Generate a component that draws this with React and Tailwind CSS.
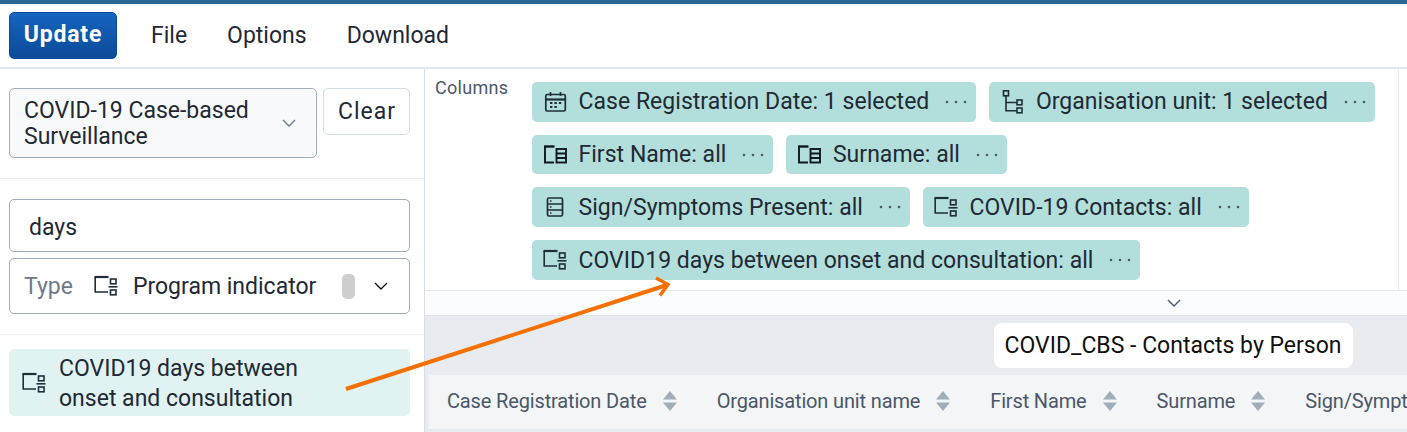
import React from "react";

const font = { fontFamily: "Roboto, sans-serif" };

function ProgramIcon({ className = "w-6 h-6" }) {
  return (
    <svg viewBox="0 0 24 24" className={className} fill="none" stroke="#1f2c3a" strokeWidth="1.6">
      <path d="M14 18H1.2V3" />
      <path d="M0.5 3h14" strokeWidth="2.2" />
      <rect x="16.5" y="5" width="5.5" height="4.8" />
      <path d="M14.5 12.8h9" />
      <rect x="16.5" y="16" width="5.5" height="4.8" />
    </svg>
  );
}

function DataIcon() {
  return (
    <svg viewBox="0 0 24 24" className="w-6 h-6" fill="none" stroke="#10171f" strokeWidth="1.9">
      <path d="M11 19.5H2V3.5" />
      <path d="M1 3.5h10.5" strokeWidth="2.4" />
      <rect x="13.5" y="6" width="9.5" height="13.5" />
      <path d="M13.5 10.5h9.5M13.5 15h9.5" />
    </svg>
  );
}

function CalendarIcon() {
  return (
    <svg viewBox="0 0 24 24" className="w-6 h-6" fill="none" stroke="#1f2c3a" strokeWidth="1.7">
      <rect x="2.8" y="4.5" width="19.5" height="16.5" rx="1.5" />
      <path d="M2.8 9.5h19.5" strokeWidth="2.2" />
      <path d="M7.5 2v4M17.5 2v4" />
      <path d="M7 13h2.4M11.4 13h2.4M15.8 13h2.4M7 17h2.4M11.4 17h2.4" strokeWidth="2.2" />
    </svg>
  );
}

function OrgIcon() {
  return (
    <svg viewBox="0 0 24 24" className="w-6 h-6" fill="none" stroke="#1f2c3a" strokeWidth="1.6">
      <rect x="3.5" y="0.8" width="5" height="5" />
      <path d="M6 5.8v15H17M6 12.5H17" />
      <rect x="17" y="10" width="5" height="4.8" />
      <rect x="17" y="18" width="5" height="4.8" />
    </svg>
  );
}

function ListIcon() {
  return (
    <svg viewBox="0 0 24 24" className="w-6 h-6" fill="none" stroke="#1f2c3a" strokeWidth="1.7">
      <rect x="4.5" y="3" width="15" height="18" rx="1.5" />
      <path d="M4.5 9h15M4.5 15h15" />
      <path d="M7 6h1.5M7 12h1.5M7 18h1.5" />
    </svg>
  );
}

function Dots() {
  return (
    <svg viewBox="0 0 22 6" className="w-[22px] h-[6px]" fill="#4a5b6b">
      <circle cx="2" cy="3" r="1.3" />
      <circle cx="11" cy="3" r="1.3" />
      <circle cx="20" cy="3" r="1.3" />
    </svg>
  );
}

function Chevron({ className = "", color = "#6e7a8a" }) {
  return (
    <svg viewBox="0 0 14 8" className={className} fill="none" stroke={color} strokeWidth="1.4">
      <path d="M1 1l6 6 6-6" />
    </svg>
  );
}

function Chip({ icon, label, nudge = false }) {
  return (
    <div className="h-[39.7px] flex items-center pl-[11px] pr-[9px] bg-[#b2dfdb] rounded-[5px] text-[23px] tracking-[0.03px] leading-none text-[#212934] whitespace-nowrap">
      <span className="flex items-center gap-[11.5px]">
        {icon}
        <span className={nudge ? "pt-px" : ""}>{label}</span>
      </span>
      <span className="ml-4">
        <Dots />
      </span>
    </div>
  );
}

function SortHead({ label }) {
  return (
    <div className="flex items-center shrink-0 whitespace-nowrap pr-10">
      <span className="text-[20px] tracking-[-0.15px] text-[#4a5768]">{label}</span>
      <svg viewBox="0 0 14 20" className="w-[14px] h-5 ml-4" fill="#a0adba">
        <path d="M7 0l7 8.5H0zM0 11.5h14L7 20z" />
      </svg>
    </div>
  );
}

export default function App() {
  return (
    <div className="relative w-[1407px] h-[432px] overflow-hidden bg-white" style={font}>
      <div className="h-1 bg-[#2c6693]" />
      <div className="h-[65px] flex items-center pl-[9px] pb-[1px] border-b-2 border-[#e3e8ed]">
        <button className="w-[108px] h-[47px] pt-px rounded-[5px] bg-gradient-to-b from-[#1565c0] to-[#0b4b98] border border-[#0a4a94] text-white text-[23px] font-bold tracking-[0.8px]">
          Update
        </button>
        <div className="flex items-center ml-[34px] pt-[2px] gap-10 text-[23px] text-[#212934]">
          <span>File</span>
          <span>Options</span>
          <span>Download</span>
        </div>
      </div>

      <div className="flex h-[363px]">
        <aside className="w-[425px] shrink-0 border-r border-[#d5dde5]">
          <div className="h-[110px] px-[9px] pt-[19px] border-b border-[#eaeef2] flex items-start gap-[6px]">
            <div className="w-[308px] h-[70px] flex items-center justify-between pl-[14px] pr-[20px] rounded-[5px] border border-[#a0adba] bg-[#f8f9fa] text-[23px] leading-[26px] text-[#212934]">
              <span className="pt-[2px]">
                COVID-19 Case-based
                <br />
                Surveillance
              </span>
              <Chevron className="w-[14px] h-2" />
            </div>
            <div className="w-[87px] h-[47px] flex items-center justify-center pl-px pt-[2px] rounded-[5px] border border-[#d5dde5] text-[23px] tracking-[1px] text-[#212934]">
              Clear
            </div>
          </div>

          <div className="h-[156px] px-[9px] pt-5 border-b border-[#eaeef2]">
            <div className="w-[401px] h-[53px] flex items-center pl-[19px] pt-[5px] rounded-[5px] border border-[#a0adba] text-[23px] text-[#212934]">
              days
            </div>
            <div className="w-[401px] mt-[6px] h-[56px] flex items-center pl-[14px] rounded-[5px] border border-[#a0adba] text-[23px] whitespace-nowrap">
              <span className="pt-[2px] text-[#6e7a8a]">Type</span>
              <span className="ml-[21px]">
                <ProgramIcon />
              </span>
              <span className="ml-[15px] pt-[2px] text-[#212934]">Program indicator</span>
              <span className="ml-[26px] w-[13px] h-[25px] rounded-[5px] bg-[#cfcfcf]" />
              <Chevron className="ml-[19px] w-[14px] h-2" color="#101010" />
            </div>
          </div>

          <div className="px-[9px] pt-[14px]">
            <div className="w-[401px] h-[67px] flex items-center pl-[13px] pt-[2px] rounded-[5px] bg-[#e0f2f1] text-[23px] leading-[30px] text-[#212934]">
              <ProgramIcon className="w-6 h-6 shrink-0 -mt-[2px]" />
              <span className="ml-[13px]">
                COVID19 days between
                <br />
                onset and consultation
              </span>
            </div>
          </div>
        </aside>

        <main className="flex-1 min-w-0 bg-[#e8ecf0] flex flex-col overflow-hidden">
          <div className="h-[222px] bg-white flex border-b border-[#e3e8ed]">
            <div className="flex-1 flex items-start pl-[10px] pt-[8px] border-r border-[#eaeef2]">
              <span className="w-[97px] shrink-0 mt-px text-[18px] tracking-[0.3px] leading-5 text-[#4a5768]">Columns</span>
              <div className="flex flex-col gap-[13px] pt-[5px]">
                <div className="flex gap-[13px]">
                  <Chip icon={<CalendarIcon />} label="Case Registration Date: 1 selected" />
                  <Chip icon={<OrgIcon />} label="Organisation unit: 1 selected" />
                </div>
                <div className="flex gap-[13px]">
                  <Chip icon={<DataIcon />} label="First Name: all" />
                  <Chip icon={<DataIcon />} label="Surname: all" />
                </div>
                <div className="flex gap-[13px]">
                  <Chip nudge icon={<ListIcon />} label="Sign/Symptoms Present: all" />
                  <Chip nudge icon={<ProgramIcon />} label="COVID-19 Contacts: all" />
                </div>
                <div className="flex">
                  <Chip nudge icon={<ProgramIcon />} label="COVID19 days between onset and consultation: all" />
                </div>
              </div>
            </div>
            <div className="w-2" />
          </div>

          {/* lower part is wider than the window, its centre sits further right */}
          <div className="w-[1498px] h-[25px] flex items-center justify-center bg-[#fbfcfd] border-b border-[#dfe4e9]">
            <Chevron className="w-[14px] h-2" color="#4a5768" />
          </div>

          <div className="w-[1496px] flex justify-center pt-[7px]">
            <div className="h-[45px] w-[359px] flex items-center justify-center pt-[2px] rounded-[8px] bg-white text-[23px] text-[#101010] whitespace-nowrap">
              COVID_CBS - Contacts by Person
            </div>
          </div>

          <div className="mt-[7px] ml-1 w-[1494px] h-[55px] flex items-center pl-[18px] pb-[2px] bg-[#f3f5f7] border-b border-[#e3e8ed]">
            <SortHead label="Case Registration Date" />
            <SortHead label="Organisation unit name" />
            <SortHead label="First Name" />
            <SortHead label="Surname" />
            <SortHead label="Sign/Symptoms Present" />
          </div>
        </main>
      </div>

      {/* orange annotation arrow */}
      <svg className="absolute inset-0 w-full h-full pointer-events-none" viewBox="0 0 1407 432" fill="none" stroke="#f57000" strokeWidth="4">
        <path d="M346 389L667 285" />
        <path d="M656 278l12 6.5-8 11" strokeWidth="3.5" />
      </svg>
    </div>
  );
}
